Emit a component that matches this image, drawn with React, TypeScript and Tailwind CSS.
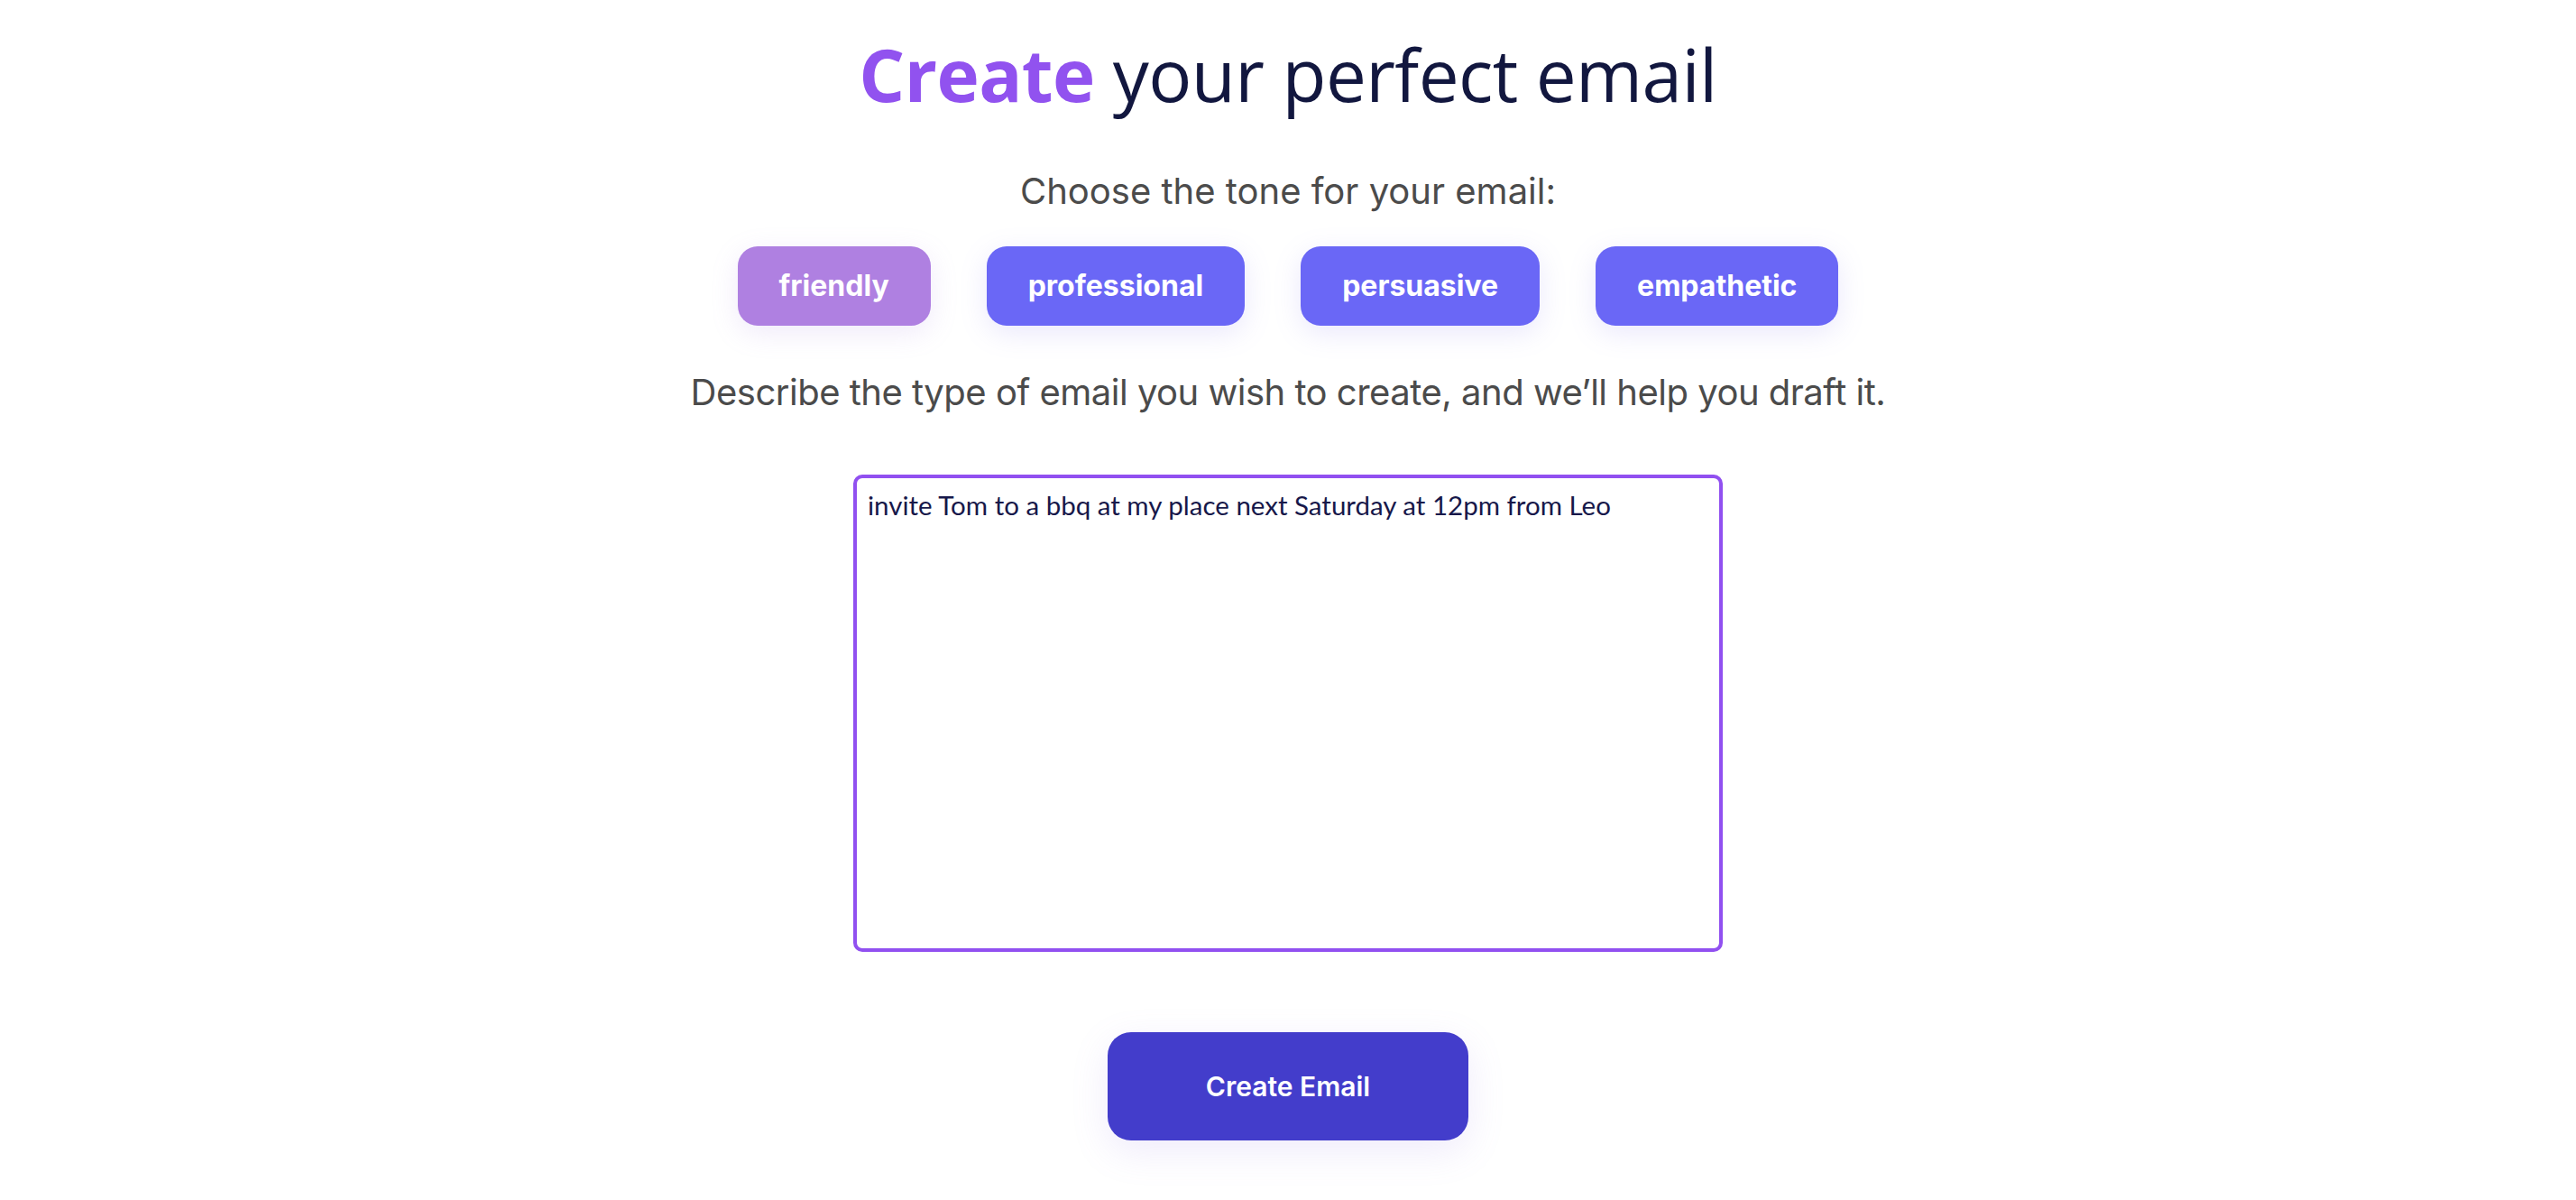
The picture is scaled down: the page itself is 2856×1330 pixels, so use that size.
const tones = [
  { label: 'friendly', active: true },
  { label: 'professional', active: false },
  { label: 'persuasive', active: false },
  { label: 'empathetic', active: false },
];

export default function App() {
  return (
    <div className="min-h-screen w-full bg-white flex flex-col items-center font-['Inter',sans-serif]">
      <h1 className="pt-[34px] text-[80px] leading-[96px] tracking-[-0.6px] font-['Open_Sans',sans-serif] text-[#12173f]">
        <span className="font-bold text-[#9152ef]">Create</span> your perfect email
      </h1>

      <p className="mt-[58px] text-[40px] leading-[48px] text-[#4b4b4b]">Choose the tone for your email:</p>

      <div className="mt-[37px] flex items-center gap-[62px]">
        {tones.map((t) => (
          <button
            key={t.label}
            className={
              t.active
                ? 'h-[88px] px-[46px] rounded-[22px] bg-[#af80e1] text-white text-[32px] font-bold shadow-[0_8px_30px_rgba(170,140,230,0.18)]'
                : 'h-[88px] px-[46px] rounded-[22px] bg-[#6a67f6] text-white text-[32px] font-bold shadow-[0_8px_30px_rgba(140,130,240,0.18)]'
            }
          >
            {t.label}
          </button>
        ))}
      </div>

      <p className="mt-[50px] text-[40px] leading-[48px] tracking-[-0.5px] text-[#4b4b4b]">
        Describe the type of email you wish to create, and we’ll help you draft it.
      </p>

      <textarea
        className="mt-[67px] w-[964px] h-[529px] border-[4px] border-[#9150f0] rounded-[10px] px-[12px] py-[12px] text-[29.5px] leading-[36px] text-[#17184a] font-['Lato',sans-serif] outline-none resize-none"
        defaultValue="invite Tom to a bbq at my place next Saturday at 12pm from Leo"
      />

      <button className="mt-[89px] w-[400px] h-[120px] rounded-[26px] bg-[#433dcb] text-white text-[30px] font-semibold shadow-[0_12px_40px_rgba(150,120,230,0.15)]">
        Create Email
      </button>
    </div>
  );
}
